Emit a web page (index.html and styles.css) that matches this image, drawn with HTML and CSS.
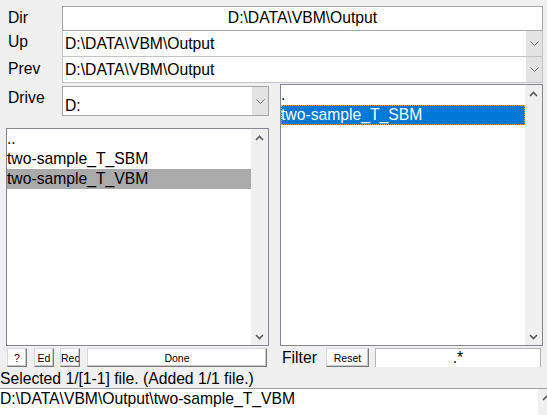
FILE: index.html
```html
<!DOCTYPE html>
<html>
<head>
<meta charset="utf-8">
<link rel="stylesheet" href="styles.css">
</head>
<body>
<div class="app">
  <div class="row row-dir">
    <div class="lbl lbl-dir">Dir</div>
    <div class="dir-field">D:\DATA\VBM\Output</div>
  </div>
  <div class="row row-up">
    <div class="lbl lbl-up">Up</div>
    <div class="combo combo-top">
      <div class="combo-txt">D:\DATA\VBM\Output</div>
      <div class="combo-btn"><svg width="9" height="5" viewBox="0 0 9 5"><polyline points="0.5,0.5 4.5,4.5 8.5,0.5" fill="none" stroke="#6d6d6d" stroke-width="1"/></svg></div>
    </div>
  </div>
  <div class="row row-prev">
    <div class="lbl lbl-prev">Prev</div>
    <div class="combo combo-top">
      <div class="combo-txt">D:\DATA\VBM\Output</div>
      <div class="combo-btn"><svg width="9" height="5" viewBox="0 0 9 5"><polyline points="0.5,0.5 4.5,4.5 8.5,0.5" fill="none" stroke="#6d6d6d" stroke-width="1"/></svg></div>
    </div>
  </div>

  <div class="main">
    <div class="col-left">
      <div class="row row-drive">
        <div class="lbl lbl-drive">Drive</div>
        <div class="combo combo-drive">
          <div class="combo-txt drive-txt">D:</div>
          <div class="combo-btn"><svg width="9" height="5" viewBox="0 0 9 5"><polyline points="0.5,0.5 4.5,4.5 8.5,0.5" fill="none" stroke="#6d6d6d" stroke-width="1"/></svg></div>
        </div>
      </div>
      <div class="list list-left">
        <div class="items">
          <div class="item">..</div>
          <div class="item">two-sample_T_SBM</div>
          <div class="item sel-grey">two-sample_T_VBM</div>
        </div>
        <div class="sbar">
          <div class="sbtn"><svg width="9" height="6" viewBox="0 0 9 6"><polyline points="1,5 4.5,1.5 8,5" fill="none" stroke="#5a5a5a" stroke-width="1.6"/></svg></div>
          <div class="sbtn"><svg width="9" height="6" viewBox="0 0 9 6"><polyline points="1,1 4.5,4.5 8,1" fill="none" stroke="#5a5a5a" stroke-width="1.6"/></svg></div>
        </div>
      </div>
      <div class="btnrow">
        <div class="wbtn b-q">?</div>
        <div class="wbtn b-ed">Ed</div>
        <div class="wbtn b-rec">Rec</div>
        <div class="wbtn b-done">Done</div>
      </div>
    </div>
    <div class="col-right">
      <div class="list list-right">
        <div class="items">
          <div class="item">.</div>
          <div class="item sel-blue">two-sample_T_SBM</div>
        </div>
        <div class="sbar">
          <div class="sbtn"><svg width="9" height="6" viewBox="0 0 9 6"><polyline points="1,5 4.5,1.5 8,5" fill="none" stroke="#5a5a5a" stroke-width="1.6"/></svg></div>
          <div class="sbtn"><svg width="9" height="6" viewBox="0 0 9 6"><polyline points="1,1 4.5,4.5 8,1" fill="none" stroke="#5a5a5a" stroke-width="1.6"/></svg></div>
        </div>
      </div>
      <div class="filterrow">
        <div class="filter-lbl">Filter</div>
        <div class="wbtn b-reset">Reset</div>
        <div class="filter-field">.*</div>
      </div>
    </div>
  </div>

  <div class="status">Selected 1/[1-1] file. (Added 1/1 file.)</div>
  <div class="bottom">
    <div class="bottom-txt">D:\DATA\VBM\Output\two-sample_T_VBM</div>
    <div class="bsbar"><svg width="9" height="6" viewBox="0 0 9 6"><polyline points="1,5 4.5,1.5 8,5" fill="none" stroke="#5a5a5a" stroke-width="1.6"/></svg></div>
  </div>
</div>
</body>
</html>
```
FILE: styles.css
```css
* { box-sizing: border-box; }
html, body { margin: 0; padding: 0; }
body {
  background: #f0f0f0;
  font-family: "Liberation Sans", Arial, sans-serif;
  font-size: 15.7px;
  color: #000;
  width: 547px;
  height: 415px;
  overflow: hidden;
}
.app { display: flex; flex-direction: column; padding-top: 6px; width: 547px; }
.row { display: flex; align-items: flex-start; }
.lbl { width: 62px; padding-left: 8px; line-height: 18px; flex: none; }
.lbl-dir { padding-top: 3px; }
.lbl-up { padding-top: 2px; }
.lbl-prev { padding-top: 3px; }
.lbl-drive { padding-top: 3px; }

.dir-field {
  width: 481px; height: 25px;
  background: #fff;
  border: 1px solid #a7a7a7;
  text-align: center;
  line-height: 18px;
  padding-top: 2px;
}
.combo { display: flex; background: #fff; }
.combo-top {
  width: 481px; height: 26px;
  border: 1px solid #c4c4c4;
  border-top: none;
}
.combo-txt { flex: 1; line-height: 18px; padding: 4px 0 0 2px; white-space: nowrap; }
.combo-btn {
  width: 16px; flex: none;
  background: #e3e3e3;
  display: flex; align-items: center; justify-content: center;
}
.combo-btn svg { display: block; }

.main { display: flex; margin-top: 1px; height: 283px; }
.col-left { width: 280px; flex: none; display: flex; flex-direction: column; }
.col-right { width: 263px; flex: none; display: flex; flex-direction: column; }

.row-drive { margin-top: 2px; }
.combo-drive {
  width: 207px; height: 30px;
  border: 1px solid #a7a7a7;
}
.drive-txt { padding-top: 10px; }

.list {
  width: 263px;
  background: #fff;
  border: 1px solid #828790;
  display: flex;
}
.list-left { margin-top: 12px; margin-left: 6px; height: 218px; }
.list-right { height: 262px; }
.items { flex: 1; }
.item { height: 20px; line-height: 20px; white-space: nowrap; }
.sel-grey { background: #aaaaaa; }
.sel-blue { background: #0078d7; color: #fff; outline: 1px dotted #e6a23c; outline-offset: -1px; }
.sbar {
  width: 17px; flex: none;
  background: #f0f0f0;
  display: flex; flex-direction: column; justify-content: space-between;
}
.sbtn { height: 17px; display: flex; align-items: center; justify-content: center; }
.sbtn svg { display: block; }

.btnrow { display: flex; margin-top: 2px; margin-left: 7px; height: 19px; }
.wbtn {
  height: 19px;
  background: #fff;
  border: 1px solid;
  border-color: #d8d8d8 #7a7a7a #7a7a7a #d8d8d8;
  box-shadow: inset -1px -1px 0 #c8c8c8;
  font-size: 10.5px;
  display: flex; align-items: center; justify-content: center;
  overflow: hidden; white-space: nowrap;
  flex: none;
}
.b-q { width: 20px; }
.b-ed { width: 20px; margin-left: 7px; }
.b-rec { width: 20px; margin-left: 6px; justify-content: flex-start; padding-left: 0; }
.b-done { width: 180px; margin-left: 7px; }

.filterrow { display: flex; margin-top: 2px; height: 19px; }
.filter-lbl { width: 46px; padding-left: 2px; padding-top: 1px; line-height: 18px; flex: none; }
.b-reset { width: 43px; }
.filter-field {
  width: 166px; margin-left: 6px; height: 19px;
  background: #fff;
  border: 1px solid #b4b4b4;
  border-bottom: none;
  text-align: center;
  line-height: 18px;
  padding-top: 0;
  flex: none;
}

.status { margin-top: 2px; height: 19px; line-height: 19px; white-space: nowrap; }
.bottom {
  display: flex;
  width: 555px; height: 30px;
  background: #fff;
  border-top: 1px solid #a0a0a0;
}
.bottom-txt { flex: 1; line-height: 20px; white-space: nowrap; }
.bsbar {
  width: 17px; flex: none; background: #f0f0f0;
  display: flex; justify-content: center; align-items: flex-start; padding-top: 6px;
}
.bsbar svg { display: block; }
```
